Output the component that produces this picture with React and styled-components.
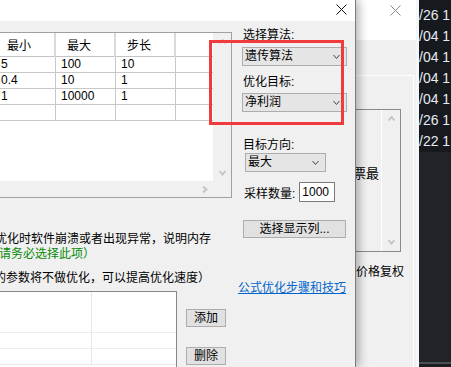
import styled, { createGlobalStyle } from 'styled-components';

const GlobalStyle = createGlobalStyle`
  html, body {
    margin: 0;
    padding: 0;
  }
  body {
    background: #1d2024;
    font-family: "Liberation Sans", "Noto Sans CJK SC", sans-serif;
    font-size: 12px;
    color: #000;
  }
`;

const paramRows = [
  { min: '5', max: '100', step: '10' },
  { min: '0.4', max: '10', step: '1' },
  { min: '1', max: '10000', step: '1' },
  { min: '', max: '', step: '' },
];

const termRows = ['/26 1', '/04 1', '/04 1', '/04 1', '/04 1', '/26 1', '/22 1'];

function Arrow({ dir, color = '#c2c2c2', weight = 1.8 }) {
  const pts = {
    up: '0.5,4.5 3.5,1 6.5,4.5',
    down: '0.5,1 3.5,4.5 6.5,1',
    right: '1,0.5 4.5,3.5 1,6.5',
  };
  const w = dir === 'right' ? 6 : 7;
  const h = dir === 'right' ? 7 : 6;
  return (
    <svg width={w} height={h} viewBox={`0 0 ${w} ${h}`}>
      <polyline points={pts[dir]} fill="none" stroke={color} strokeWidth={weight} />
    </svg>
  );
}

function CloseMark({ color }) {
  return (
    <svg width="11" height="11" viewBox="0 0 11 11">
      <path d="M0.5 0.5 L10.5 10.5 M10.5 0.5 L0.5 10.5" stroke={color} strokeWidth="1" />
    </svg>
  );
}

function Combo({ value, width, indent }) {
  return (
    <ComboBox $w={width} $indent={indent}>
      <span>{value}</span>
      <Arrow dir="down" color="#444" weight={1} />
    </ComboBox>
  );
}

export default function App() {
  return (
    <>
      <GlobalStyle />
      <Desktop>
        <BackWindow>
          <BackTitle>
            <CloseMark color="#8a8a8a" />
          </BackTitle>
          <BackPanel>
            <BackList>
              <BackListBody>票最</BackListBody>
              <BackScroll>
                <ArrowBox $h={18}><Arrow dir="up" /></ArrowBox>
                <ArrowBox $h={18}><Arrow dir="down" /></ArrowBox>
              </BackScroll>
            </BackList>
            <BackCaption>价格复权</BackCaption>
          </BackPanel>
        </BackWindow>

        <Terminal>
          <TermRows>
            {termRows.map((t, i) => (
              <TermRow key={i}>{t}</TermRow>
            ))}
          </TermRows>
          <TermFoot />
          <TermTail />
        </Terminal>

        <Dialog>
          <TitleBar>
            <CloseMark color="#111" />
          </TitleBar>
          <Body>
            <LeftCol>
              <TableFrame>
                <TableView>
                  <ParamGrid>
                    <HeadCell>最小</HeadCell>
                    <HeadCell>最大</HeadCell>
                    <HeadCell>步长</HeadCell>
                    <HeadCell />
                    {paramRows.map((r, i) => (
                      <Row key={i}>
                        <Cell>{r.min}</Cell>
                        <Cell>{r.max}</Cell>
                        <Cell>{r.step}</Cell>
                        <Cell />
                      </Row>
                    ))}
                  </ParamGrid>
                </TableView>
                <VScroll>
                  <ArrowBox $h={17}><Arrow dir="up" /></ArrowBox>
                  <ArrowBox $h={17}><Arrow dir="down" /></ArrowBox>
                </VScroll>
                <HScroll>
                  <ArrowBox $h={16} $w={17}><Arrow dir="right" /></ArrowBox>
                </HScroll>
                <Corner />
              </TableFrame>

              <Notes>
                <Note $shift={-5}>优化时软件崩溃或者出现异常，说明内存</Note>
                <Note $shift={-1} $color="#078a07">请务必选择此项）</Note>
                <Note $shift={-6} $gap={9}>的参数将不做优化，可以提高优化速度）</Note>
              </Notes>

              <Bottom>
                <FormulaList>
                  <ListCell $h={41} />
                  <ListCell $h={41} />
                  <ListCell $h={16} />
                  <ListCell $h={16} />
                  <ListCell $h={16} />
                  <ListCell $h={16} />
                </FormulaList>
                <ButtonCol>
                  <SmallButton>添加</SmallButton>
                  <SmallButton>删除</SmallButton>
                </ButtonCol>
              </Bottom>
            </LeftCol>

            <RightCol>
              <FieldLabel $top={7}>选择算法:</FieldLabel>
              <Spacer $h={5} />
              <Combo value="遗传算法" width={105} />
              <FieldLabel $top={9}>优化目标:</FieldLabel>
              <Spacer $h={4} />
              <Combo value="净利润" width={105} />
              <FieldLabel $top={26}>目标方向:</FieldLabel>
              <Spacer $h={1} />
              <Combo value="最大" width={81} indent={3} />
              <SampleRow>
                <span>采样数量:</span>
                <SampleInput>1000</SampleInput>
              </SampleRow>
              <WideButton>选择显示列...</WideButton>
              <HelpLink>公式优化步骤和技巧</HelpLink>
            </RightCol>
          </Body>
        </Dialog>

        <Highlight />
      </Desktop>
    </>
  );
}

const Desktop = styled.div`
  position: relative;
  width: 451px;
  height: 367px;
  overflow: hidden;
  display: flex;
`;

/* background window, mostly covered by the dialog */
const BackWindow = styled.div`
  flex: 1;
  display: flex;
  flex-direction: column;
  background: #f0f0f0;
  border-right: 3px solid #f6f6f6;
`;

const BackTitle = styled.div`
  height: 40px;
  background: #ffffff;
  display: flex;
  justify-content: flex-end;
  align-items: flex-start;
  padding: 5px 15px 0 0;
  box-sizing: border-box;
`;

const BackPanel = styled.div`
  flex: 1;
  margin: 35px 2px 0 0;
  border-top: 1px solid #ffffff;
  border-right: 1px solid #ffffff;
  display: flex;
  flex-direction: column;
`;

const BackList = styled.div`
  margin: 33px 12px 0 0;
  height: 143px;
  box-sizing: border-box;
  border-top: 1px solid #8a8a8a;
  border-right: 1px solid #8a8a8a;
  border-bottom: 1px solid #8a8a8a;
  display: flex;
`;

const BackListBody = styled.div`
  flex: 1;
  text-align: right;
  padding: 56px 2px 0 0;
  font-size: 13px;
  line-height: 15px;
`;

const BackScroll = styled.div`
  width: 18px;
  border-left: 1px solid #ffffff;
  display: flex;
  flex-direction: column;
  justify-content: space-between;
`;

const BackCaption = styled.div`
  margin-top: 13px;
  padding-right: 9px;
  text-align: right;
  line-height: 15px;
  font-size: 12px;
`;

const Terminal = styled.div`
  width: 32px;
  display: flex;
  flex-direction: column;
  overflow: hidden;
`;

const TermRows = styled.div`
  background: #16191d;
  padding-top: 5px;
`;

const TermRow = styled.div`
  height: 21px;
  line-height: 21px;
  white-space: nowrap;
  font-size: 14px;
  color: #e6ebf2;
`;

const TermFoot = styled.div`
  flex: 1;
  background: #202327;
  border-bottom: 2px solid #4b4e53;
`;

const TermTail = styled.div`
  height: 3px;
  background: #1a1d21;
`;

/* the optimisation dialog in front */
const Dialog = styled.div`
  position: absolute;
  left: 0;
  top: 0;
  width: 356px;
  height: 367px;
  box-sizing: border-box;
  background: #f0f0f0;
  border-right: 1px solid #7d7d7d;
  box-shadow: 3px 0 9px rgba(0, 0, 0, 0.3);
  overflow: hidden;
  display: flex;
  flex-direction: column;
`;

const TitleBar = styled.div`
  height: 21px;
  flex-shrink: 0;
  background: #ffffff;
  display: flex;
  justify-content: flex-end;
  align-items: flex-start;
  padding: 4px 8px 0 0;
  box-sizing: border-box;
`;

const Body = styled.div`
  display: grid;
  grid-template-columns: 232px 105px;
  column-gap: 10px;
  padding-right: 8px;
`;

const LeftCol = styled.div`
  display: flex;
  flex-direction: column;
  min-width: 0;
`;

const TableFrame = styled.div`
  margin-top: 11px;
  display: grid;
  grid-template-columns: 213px 18px;
  grid-template-rows: 148px 16px;
  border-top: 1px solid #a0a0a0;
  border-right: 1px solid #a0a0a0;
  border-bottom: 1px solid #a0a0a0;
`;

const TableView = styled.div`
  background: #ffffff;
  overflow: hidden;
`;

const ParamGrid = styled.div`
  display: grid;
  grid-template-columns: repeat(4, 60px);
  margin-left: -4px;
`;

const HeadCell = styled.div`
  height: 24px;
  box-sizing: border-box;
  padding-left: 11px;
  display: flex;
  align-items: center;
  border-right: 2px solid #dadada;
  border-bottom: 1px solid #c4c4c4;
  white-space: nowrap;
`;

const Row = styled.div`
  display: contents;
`;

const Cell = styled.div`
  height: 16px;
  box-sizing: border-box;
  padding-left: 5px;
  line-height: 15px;
  border-right: 1px solid #c8c8c8;
  border-bottom: 1px solid #c8c8c8;
  white-space: nowrap;
`;

const VScroll = styled.div`
  background: #f0f0f0;
  display: flex;
  flex-direction: column;
  justify-content: space-between;
`;

const HScroll = styled.div`
  background: #f0f0f0;
  display: flex;
  justify-content: flex-end;
`;

const Corner = styled.div`
  background: #f0f0f0;
`;

const ArrowBox = styled.div`
  height: ${(p) => p.$h}px;
  width: ${(p) => (p.$w ? `${p.$w}px` : 'auto')};
  display: flex;
  align-items: center;
  justify-content: center;
`;

const Notes = styled.div`
  margin-top: 34px;
  display: flex;
  flex-direction: column;
`;

const Note = styled.div`
  margin-left: ${(p) => p.$shift}px;
  margin-top: ${(p) => p.$gap || 0}px;
  color: ${(p) => p.$color || '#000'};
  line-height: 15px;
  white-space: nowrap;
`;

const Bottom = styled.div`
  margin-top: 5px;
  display: flex;
  align-items: flex-start;
`;

const FormulaList = styled.div`
  width: 177px;
  height: 90px;
  box-sizing: border-box;
  background: #ffffff;
  border-top: 1px solid #828790;
  border-right: 1px solid #828790;
  display: grid;
  grid-template-columns: 92px 1fr;
  align-content: start;
`;

const ListCell = styled.div`
  height: ${(p) => p.$h}px;
  box-sizing: border-box;
  border-bottom: 1px solid #ececec;
  &:nth-child(odd) {
    border-right: 1px solid #e6e6e6;
  }
`;

const ButtonCol = styled.div`
  margin-left: 9px;
  padding-top: 18px;
  display: flex;
  flex-direction: column;
  gap: 20px;
`;

const SmallButton = styled.div`
  width: 40px;
  height: 18px;
  box-sizing: border-box;
  border: 1px solid #adadad;
  background: #e1e1e1;
  text-align: center;
  line-height: 16px;
`;

const RightCol = styled.div`
  display: flex;
  flex-direction: column;
  align-items: flex-start;
`;

const FieldLabel = styled.div`
  margin-top: ${(p) => p.$top}px;
  margin-left: 1px;
  line-height: 14px;
  white-space: nowrap;
`;

const Spacer = styled.div`
  height: ${(p) => p.$h}px;
`;

const ComboBox = styled.div`
  width: ${(p) => p.$w}px;
  margin-left: ${(p) => p.$indent || 0}px;
  height: 19px;
  box-sizing: border-box;
  border: 1px solid #adadad;
  background: #e5e5e5;
  display: flex;
  align-items: center;
  justify-content: space-between;
  padding: 0 6px 0 2px;
  line-height: 15px;
  white-space: nowrap;
`;

const SampleRow = styled.div`
  margin: 10px 0 0 2px;
  display: flex;
  align-items: center;
  gap: 4px;
  white-space: nowrap;
`;

const SampleInput = styled.div`
  width: 36px;
  height: 20px;
  box-sizing: border-box;
  border: 1px solid #7a7a7a;
  background: #ffffff;
  padding-left: 2px;
  line-height: 18px;
`;

const WideButton = styled.div`
  margin: 18px 0 0 1px;
  width: 103px;
  height: 18px;
  box-sizing: border-box;
  border: 1px solid #adadad;
  background: #e1e1e1;
  text-align: center;
  line-height: 16px;
  white-space: nowrap;
`;

const HelpLink = styled.a`
  margin-top: 43px;
  align-self: flex-end;
  margin-right: 1px;
  color: #0066cc;
  text-decoration: underline;
  line-height: 15px;
  white-space: nowrap;
  cursor: pointer;
`;

/* red annotation box drawn over the screenshot */
const Highlight = styled.div`
  position: absolute;
  left: 209px;
  top: 40px;
  width: 135px;
  height: 85px;
  box-sizing: border-box;
  border: 3px solid #ef3b3b;
  pointer-events: none;
`;
